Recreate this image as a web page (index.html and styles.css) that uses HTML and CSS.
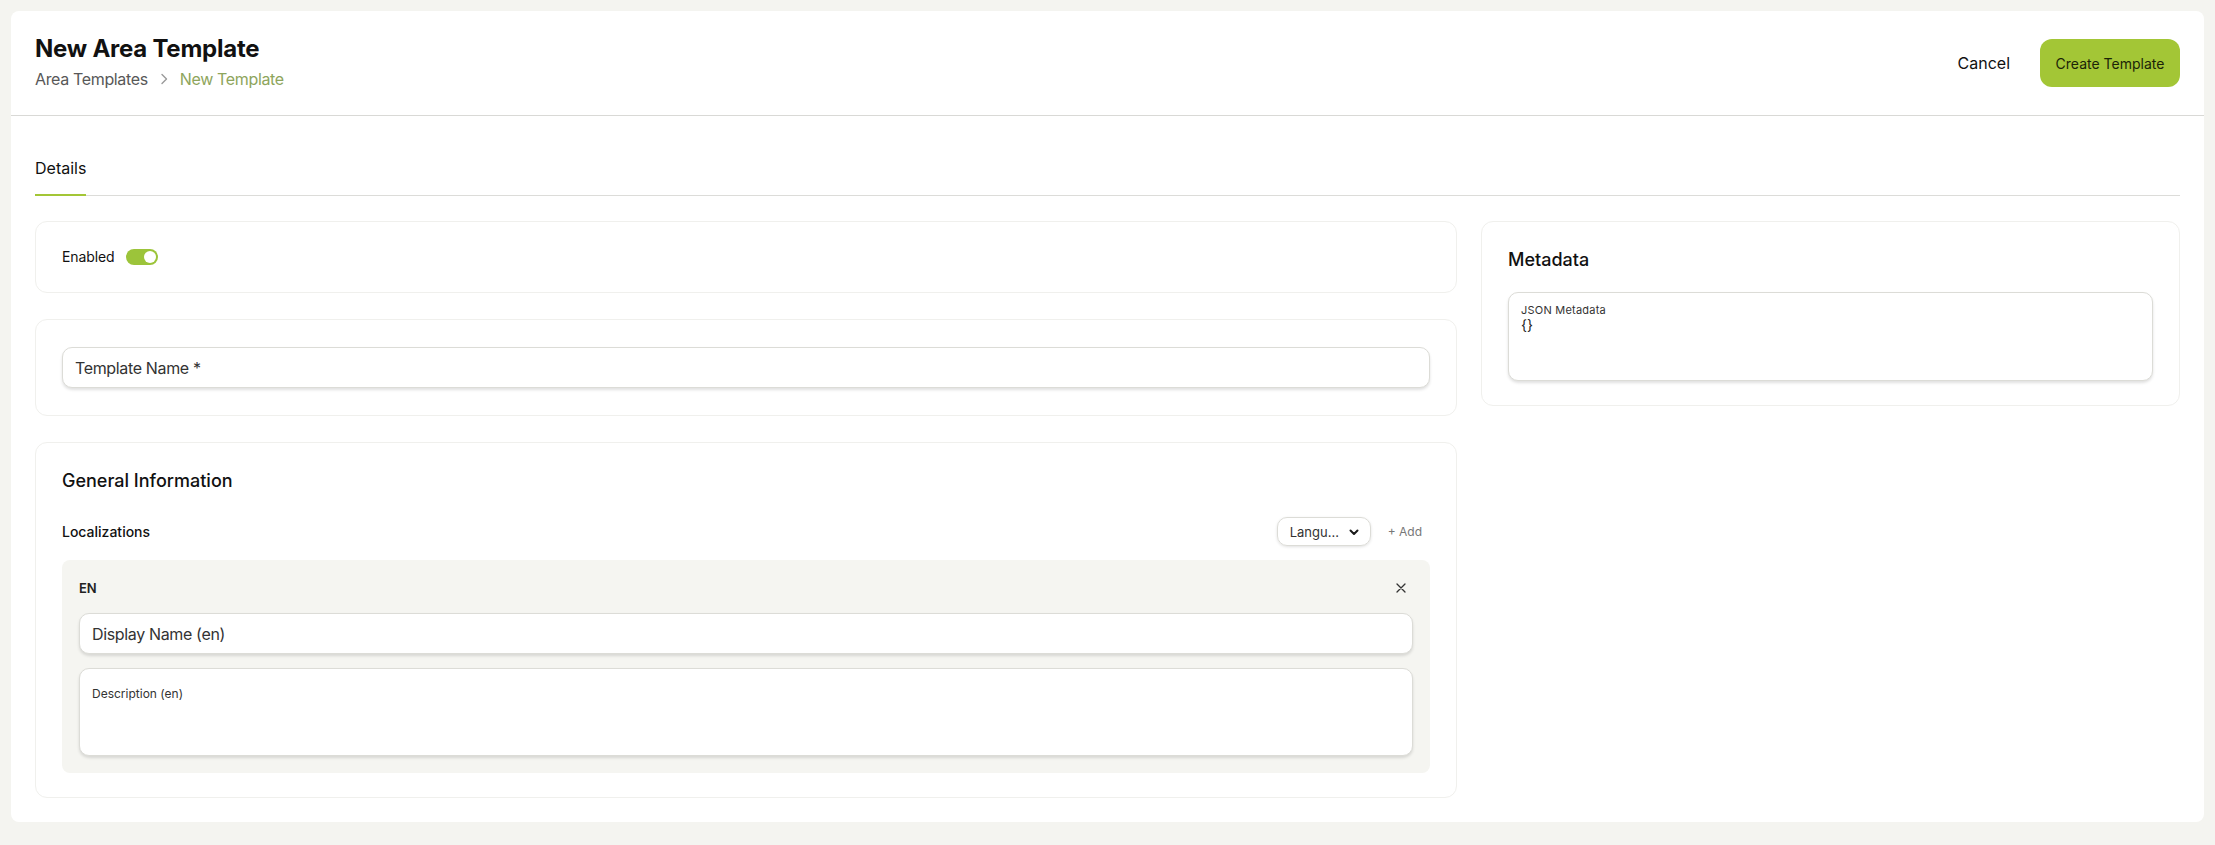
FILE: index.html
```html
<!DOCTYPE html>
<html lang="en">
<head>
    <meta charset="UTF-8">
    <meta name="viewport" content="width=device-width, initial-scale=1.0">
    <title>New Area Template</title>
    <link rel="stylesheet" href="styles.css">
</head>
<body>
    <div class="panel">
        <header class="page-header">
            <div class="title-block">
                <h1>New Area Template</h1>
                <nav class="breadcrumb">
                    <span>Area Templates</span>
                    <svg width="12" height="14" viewBox="0 0 12 14"><path d="M4 2.5l4.5 4.5L4 11.5" fill="none" stroke="#9a9a9a" stroke-width="1.4" stroke-linecap="round" stroke-linejoin="round"/></svg>
                    <span class="current">New Template</span>
                </nav>
            </div>
            <div class="actions">
                <button class="btn-link">Cancel</button>
                <button class="btn-primary">Create Template</button>
            </div>
        </header>

        <div class="content">
            <div class="tabs">
                <div class="tab active">Details</div>
            </div>

            <div class="grid">
                <div class="col-main">
                    <section class="card">
                        <div class="switch-row">
                            <span>Enabled</span>
                            <span class="switch"><span class="knob"></span></span>
                        </div>
                    </section>

                    <section class="card card-name">
                        <input class="field" type="text" placeholder="Template Name *">
                    </section>

                    <section class="card">
                        <h2>General Information</h2>
                        <div class="loc-row">
                            <span class="loc-label">Localizations</span>
                            <div class="loc-tools">
                                <div class="select">
                                    <span>Langu...</span>
                                    <svg width="12" height="12" viewBox="0 0 12 12"><path d="M2.5 4.5L6 8l3.5-3.5" fill="none" stroke="#1a1a1a" stroke-width="2" stroke-linecap="round" stroke-linejoin="round"/></svg>
                                </div>
                                <button class="btn-add">+ Add</button>
                            </div>
                        </div>
                        <div class="locale">
                            <div class="locale-head">
                                <span class="locale-code">EN</span>
                                <button class="btn-close">
                                    <svg width="10" height="10" viewBox="0 0 10 10"><path d="M1 1l8 8M9 1l-8 8" stroke="#333" stroke-width="1.3" stroke-linecap="round"/></svg>
                                </button>
                            </div>
                            <input class="field" type="text" placeholder="Display Name (en)">
                            <div class="area area-desc">
                                <span class="area-label">Description (en)</span>
                            </div>
                        </div>
                    </section>
                </div>

                <div class="col-side">
                    <section class="card">
                        <h2>Metadata</h2>
                        <div class="area area-json">
                            <span class="area-label small">JSON Metadata</span>
                            <span class="area-value">{}</span>
                        </div>
                    </section>
                </div>
            </div>
        </div>
    </div>
</body>
</html>
```

FILE: styles.css
```css
* {
    box-sizing: border-box;
}
body {
    margin: 0;
    padding: 11px;
    background-color: #f4f4f0;
    font-family: 'Inter', 'Roboto', sans-serif;
    color: #111;
}
button {
    font-family: inherit;
    border: none;
    background: none;
    cursor: pointer;
    padding: 0;
}
.panel {
    background-color: #fff;
    border-radius: 8px;
    padding-bottom: 24px;
}
.page-header {
    display: flex;
    justify-content: space-between;
    align-items: center;
    height: 105px;
    padding: 0 24px;
    border-bottom: 1px solid #d9d9d6;
}
.title-block h1 {
    margin: 0;
    font-size: 24px;
    line-height: 28px;
    font-weight: 700;
    letter-spacing: -0.01em;
}
.breadcrumb {
    display: flex;
    align-items: center;
    gap: 10px;
    margin-top: 4px;
    font-size: 16px;
    line-height: 24px;
    letter-spacing: -0.35px;
    color: #585858;
}
.breadcrumb .current {
    color: #8ea55c;
}
.actions {
    display: flex;
    align-items: center;
    gap: 14px;
}
.btn-link {
    font-size: 16px;
    color: #111;
    padding: 8px 16px;
}
.btn-primary {
    width: 140px;
    height: 48px;
    border-radius: 12px;
    background-color: #a3c636;
    color: #1b2408;
    font-size: 14px;
}
.content {
    padding: 0 24px;
}
.tabs {
    display: flex;
    margin-top: 40px;
    border-bottom: 1px solid #dcdcd9;
}
.tab {
    font-size: 16px;
    line-height: 24px;
    padding-bottom: 14px;
    margin-bottom: -1px;
    border-bottom: 2px solid transparent;
}
.tab.active {
    border-bottom-color: #a3c636;
}
.grid {
    display: grid;
    grid-template-columns: repeat(12, minmax(0, 1fr));
    gap: 24px;
    margin-top: 25px;
    align-items: start;
}
.col-main {
    grid-column: span 8;
    display: flex;
    flex-direction: column;
    gap: 26px;
}
.col-side {
    grid-column: span 4;
}
.card {
    border: 1px solid #f0f0ed;
    border-radius: 12px;
    padding: 24px 26px 24px 26px;
}
.card-name {
    padding-top: 27px;
    padding-bottom: 27px;
}
.card h2 {
    margin: 0;
    font-size: 18px;
    line-height: 28px;
    font-weight: 500;
}
.switch-row {
    display: flex;
    align-items: center;
    gap: 11px;
    font-size: 14px;
    line-height: 22px;
    letter-spacing: -0.1px;
}
.switch {
    position: relative;
    width: 32px;
    height: 16px;
    border-radius: 8px;
    background-color: #9cc43a;
}
.switch .knob {
    position: absolute;
    top: 2px;
    right: 2px;
    width: 12px;
    height: 12px;
    border-radius: 50%;
    background-color: #fff;
}
.field {
    display: block;
    width: 100%;
    height: 41px;
    padding: 0 12px;
    border: 1px solid #dcdcd7;
    border-radius: 10px;
    box-shadow: 0 2px 3px rgba(0, 0, 0, 0.12);
    font-family: inherit;
    font-size: 16px;
    letter-spacing: -0.35px;
    color: #333;
    background-color: #fff;
    outline: none;
}
.field::placeholder {
    color: #333;
}
.loc-row {
    display: flex;
    justify-content: space-between;
    align-items: center;
    margin-top: 22px;
}
.loc-label {
    font-size: 14px;
    font-weight: 500;
}
.loc-tools {
    display: flex;
    align-items: center;
    gap: 9px;
}
.select {
    display: flex;
    align-items: center;
    justify-content: space-between;
    width: 94px;
    height: 29px;
    padding: 0 10px 0 12px;
    border: 1px solid #dcdcd7;
    border-radius: 10px;
    box-shadow: 0 1px 3px rgba(0, 0, 0, 0.12);
    font-size: 13px;
    color: #333;
}
.btn-add {
    padding: 4px 8px;
    font-size: 12px;
    color: #777;
}
.locale {
    display: flex;
    flex-direction: column;
    gap: 14px;
    margin-top: 14px;
    padding: 16px 17px 17px;
    border-radius: 8px;
    background-color: #f5f5f1;
}
.locale-head {
    display: flex;
    justify-content: space-between;
    align-items: center;
    margin-bottom: -1px;
}
.locale-code {
    font-size: 13px;
    font-weight: 600;
    color: #222;
}
.btn-close {
    display: flex;
    align-items: center;
    justify-content: center;
    width: 24px;
    height: 24px;
}
.area {
    display: flex;
    flex-direction: column;
    border: 1px solid #dcdcd7;
    border-radius: 10px;
    box-shadow: 0 2px 3px rgba(0, 0, 0, 0.12);
    background-color: #fff;
}
.area-desc {
    height: 88px;
    padding: 17px 12px 0;
}
.area-label {
    font-size: 12px;
    line-height: 16px;
    color: #333;
}
.area-label.small {
    font-size: 11px;
    line-height: 14px;
    letter-spacing: 0.02em;
}
.area-json {
    height: 89px;
    margin-top: 18px;
    padding: 10px 12px 0;
}
.area-value {
    font-size: 14px;
    line-height: 15px;
    color: #222;
}
```
